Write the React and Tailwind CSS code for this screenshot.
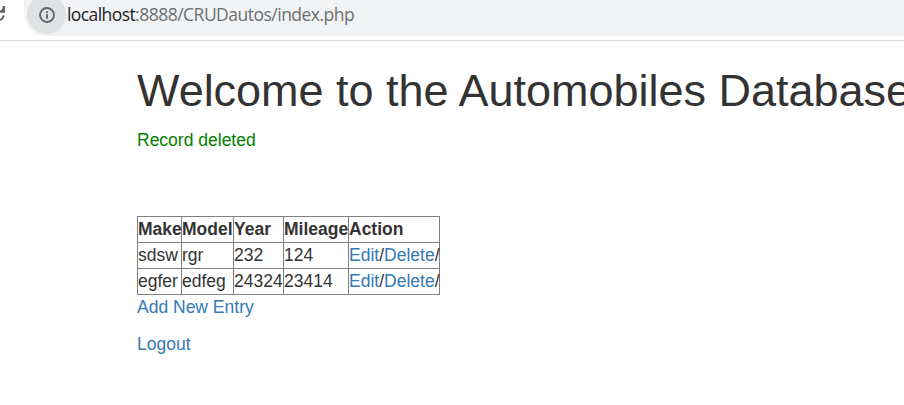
const autos = [
  { make: "sdsw", model: "rgr", year: "232", mileage: "124" },
  { make: "egfer", model: "edfeg", year: "24324", mileage: "23414" },
];

function Cell({ children, head }) {
  const Tag = head ? "th" : "td";
  return (
    <Tag className="h-[26px] border border-[#808080] p-0 text-left leading-[25px] whitespace-nowrap">
      {children}
    </Tag>
  );
}

function Link({ children }) {
  return (
    <a href="#" className="text-[#337ab7]">
      {children}
    </a>
  );
}

function AddressBar() {
  return (
    <header className="flex h-[41px] items-start overflow-hidden border-b border-[#dadce0] bg-white">
      <svg className="h-9 w-6 shrink-0" viewBox="0 0 24 36" fill="none">
        <path d="M5 6v6.8H-2V10.6L0.6 10.4L2.6 8.4V6Z" fill="#5f6368" />
        <path d="M3.7 15.4A6.4 6.4 0 0 1-2.5 20.4" stroke="#5f6368" strokeWidth="2" />
      </svg>
      <div className="flex h-9 min-w-0 flex-1 items-start rounded-bl-[21px] bg-[#f1f3f4] pl-[3px]">
        <span className="-mt-[5px] flex size-[39px] shrink-0 items-center justify-center rounded-full bg-[#dfe1e3]">
          <svg className="size-4" viewBox="0 0 16 16" fill="none">
            <circle cx="8" cy="8" r="7" stroke="#5f6368" strokeWidth="1.8" />
            <path d="M8 7.2v4.6M8 4.2v1.8" stroke="#5f6368" strokeWidth="1.9" />
          </svg>
        </span>
        <span className="-mt-px ml-px h-[30px] font-['Open_Sans','Noto_Sans',sans-serif] text-[17.5px] leading-[30px] tracking-[-0.51px] whitespace-nowrap text-[#6b6f73]">
          <span className="tracking-[-0.58px] text-[#202124]">localhost</span>:8888/CRUDautos/index.php
        </span>
      </div>
    </header>
  );
}

export default function App() {
  return (
    <div className="h-[405px] w-full overflow-hidden bg-white font-['Liberation_Sans',Arial,sans-serif] text-[17.5px] leading-[25px] text-[#333]">
      <AddressBar />
      <main className="pt-[25px] pl-[137px]">
        <h1 className="text-[45px] leading-[49px] font-normal tracking-[-0.02px] whitespace-nowrap">
          Welcome to the Automobiles Database
        </h1>
        <p className="mt-[13px] text-[green]">Record deleted</p>
        <table className="mt-[63px] w-[303px] table-fixed border-collapse">
          <colgroup>
            <col className="w-[44px]" />
            <col className="w-[52px]" />
            <col className="w-[50px]" />
            <col className="w-[65px]" />
            <col className="w-[91px]" />
          </colgroup>
          <thead>
            <tr>
              <Cell head>Make</Cell>
              <Cell head>Model</Cell>
              <Cell head>Year</Cell>
              <Cell head>Mileage</Cell>
              <Cell head>Action</Cell>
            </tr>
          </thead>
          <tbody>
            {autos.map((auto) => (
              <tr key={auto.make}>
                <Cell>{auto.make}</Cell>
                <Cell>{auto.model}</Cell>
                <Cell>{auto.year}</Cell>
                <Cell>{auto.mileage}</Cell>
                <Cell>
                  <Link>Edit</Link>/<Link>Delete</Link>/
                </Cell>
              </tr>
            ))}
          </tbody>
        </table>
        <p>
          <Link>Add New Entry</Link>
        </p>
        <p className="mt-3">
          <Link>Logout</Link>
        </p>
      </main>
    </div>
  );
}
